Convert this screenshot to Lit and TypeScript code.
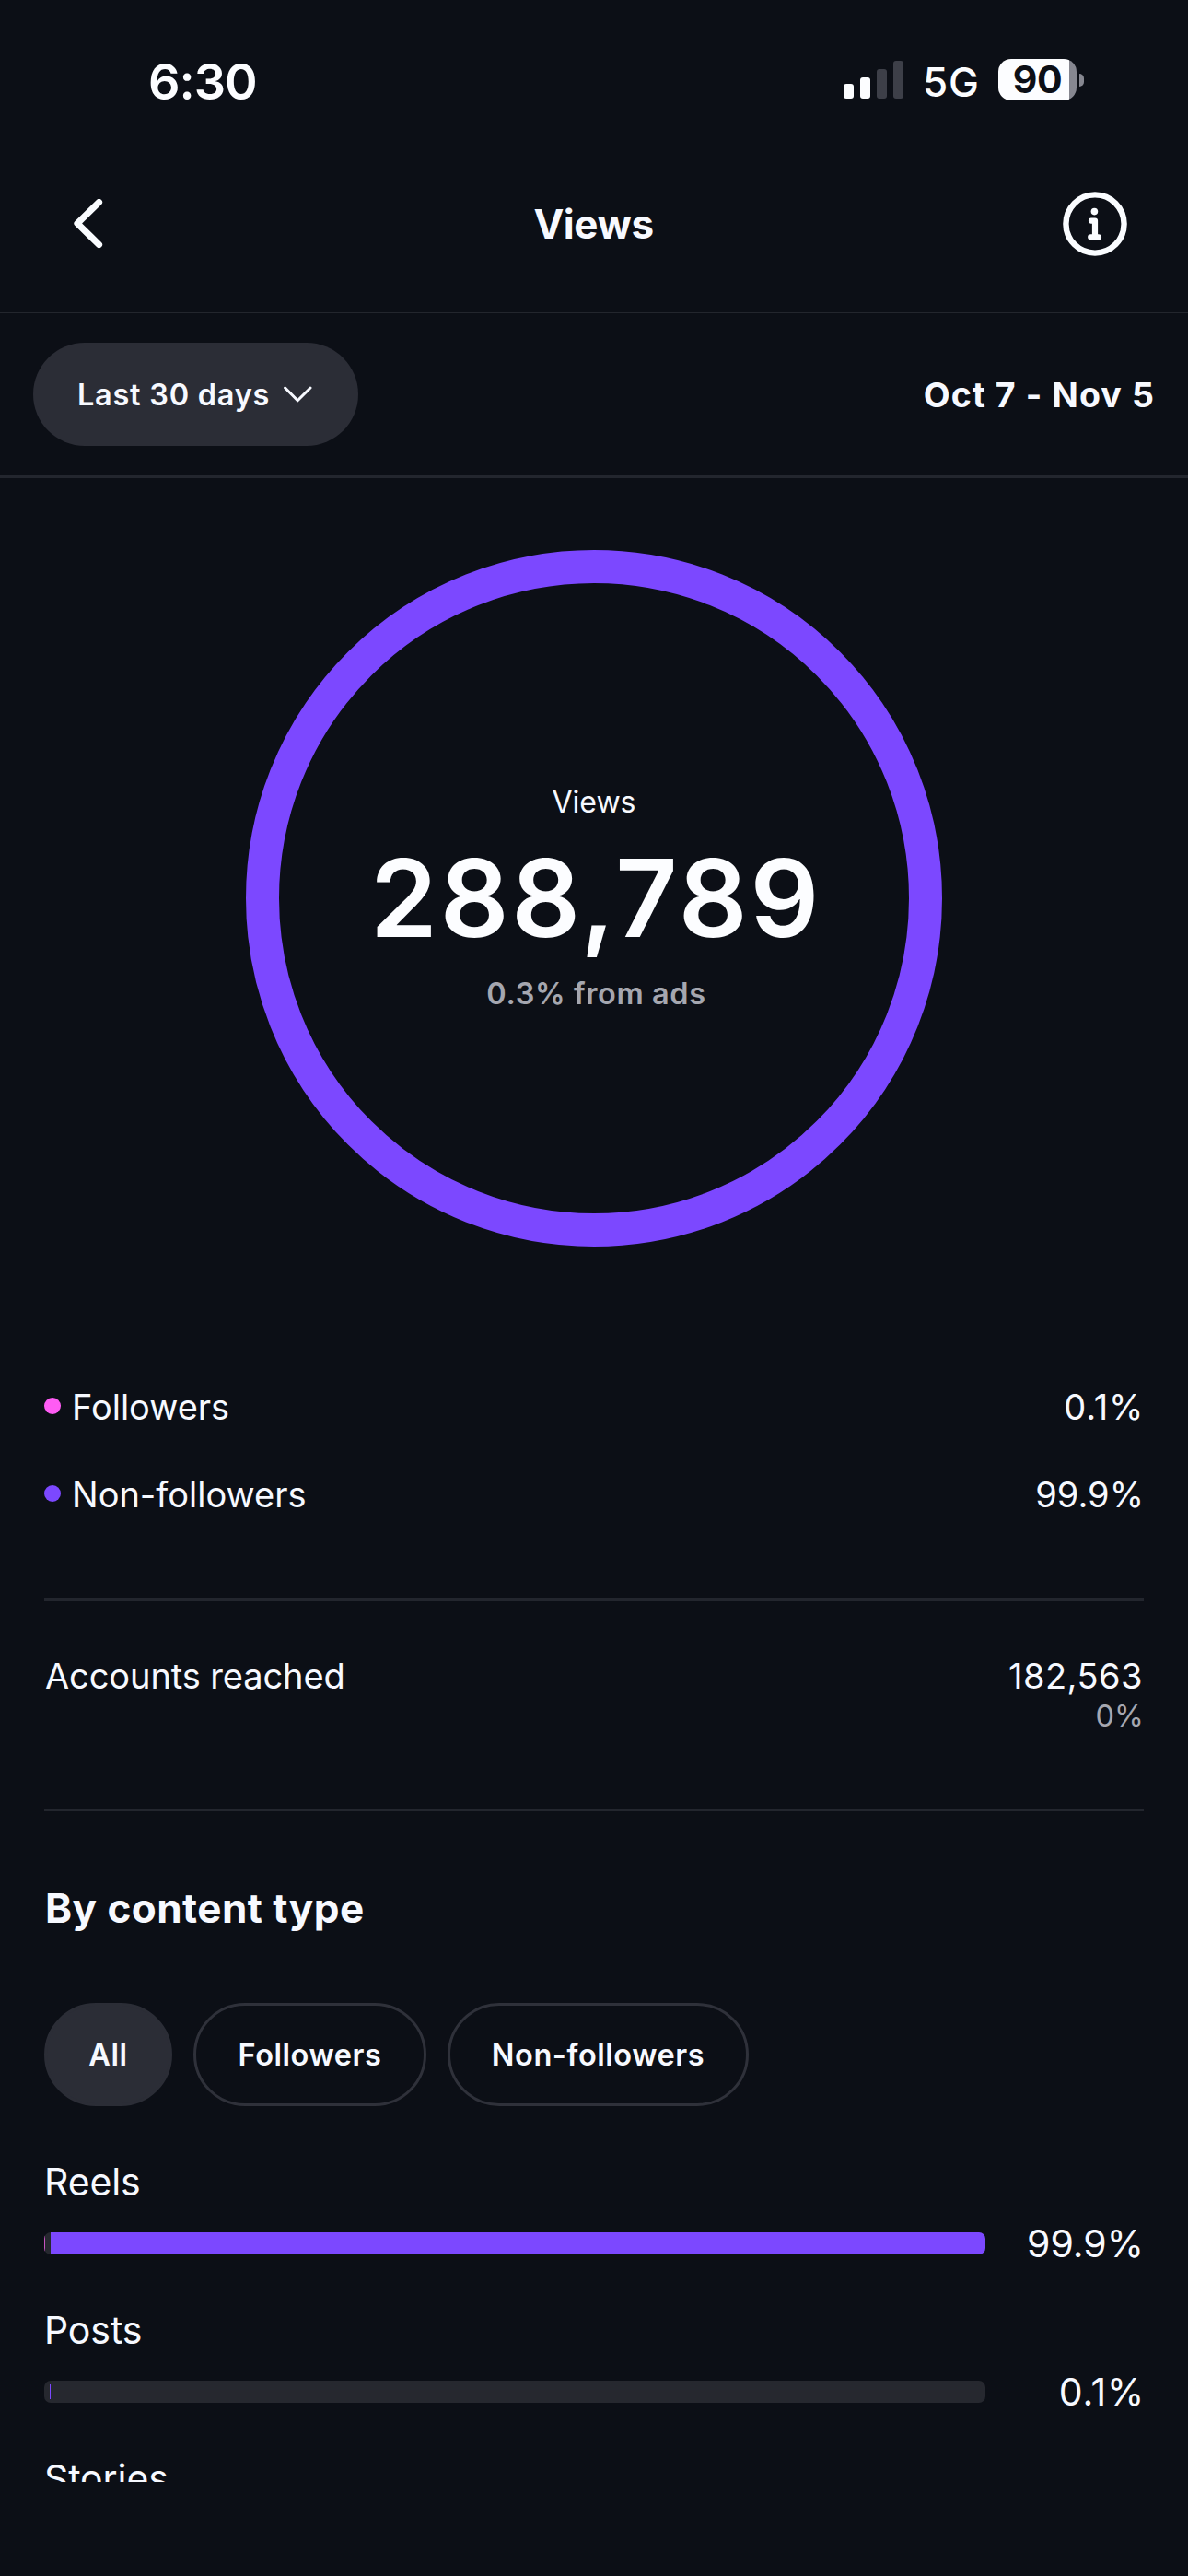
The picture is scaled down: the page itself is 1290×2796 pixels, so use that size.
import { LitElement, html, css, svg, nothing } from "lit";
import { customElement, property } from "lit/decorators.js";
import { classMap } from "lit/directives/class-map.js";

const chevronLeft = svg`<path d="M28.5 3.5 5 26.5 28.5 49.5" fill="none" stroke="#fafcff" stroke-width="7.2" stroke-linecap="round" stroke-linejoin="round"/>`;

@customElement("status-bar")
class StatusBar extends LitElement {
  static styles = css`
    :host {
      display: flex;
      align-items: center;
      justify-content: space-between;
      height: 176px;
      padding: 0 113px 0 161px;
      box-sizing: border-box;
      color: #fcfdff;
    }
    .time {
      font-size: 54px;
      font-weight: 600;
      letter-spacing: -1.04px;
    }
    .right {
      display: flex;
      align-items: center;
    }
    .signal {
      display: flex;
      align-items: flex-end;
      gap: 7px;
      height: 41px;
      margin: 0 21px 3px 0;
    }
    .signal i {
      width: 11px;
      border-radius: 3px;
      background: #fcfdff;
    }
    .b1 { height: 16px; }
    .b2 { height: 23px; }
    .b3 { height: 32px; }
    .b4 { height: 41px; }
    .signal .off { background: #3d3f48; }
    .network {
      width: 82px;
      padding-top: 1px;
      box-sizing: border-box;
      font-size: 44px;
      font-weight: 450;
      letter-spacing: 0.8px;
    }
    .battery {
      display: flex;
      align-items: center;
      gap: 3px;
      margin-bottom: 3px;
    }
    .cell {
      display: flex;
      align-items: center;
      justify-content: center;
      width: 85px;
      height: 45px;
      border-radius: 14px;
      background: linear-gradient(90deg, #fcfdff 77px, #868790 77px);
      color: #0c0f16;
      font-size: 41px;
      font-weight: 650;
      line-height: 45px;
      letter-spacing: -0.4px;
    }
    .nub {
      width: 5px;
      height: 14px;
      border-radius: 0 6px 6px 0;
      background: #868790;
    }
  `;
  render() {
    return html`
      <span class="time">6:30</span>
      <div class="right">
        <div class="signal"><i class="b1"></i><i class="b2"></i><i class="b3 off"></i><i class="b4 off"></i></div>
        <span class="network">5G</span>
        <div class="battery"><span class="cell">90</span><span class="nub"></span></div>
      </div>
    `;
  }
}

@customElement("content-bar")
class ContentBar extends LitElement {
  @property() label = "";
  @property() value = "";
  @property({ type: Number }) share = 0;
  static styles = css`
    :host {
      display: block;
      height: 116px;
      flex: none;
      font-size: 41px;
      line-height: 50px;
    }
    .label {
      height: 50px;
      line-height: 49px;
      letter-spacing: -0.1px;
    }
    .row {
      display: flex;
      align-items: center;
      justify-content: space-between;
      height: 50px;
      margin-top: 16px;
    }
    .track {
      display: flex;
      gap: 6px;
      width: 1022px;
      height: 24px;
      border-radius: 7px;
      overflow: hidden;
      background: #26282f;
    }
    .followers {
      width: 1px;
      flex: none;
      background: #c552c0;
    }
    .followers.empty { background: none; }
    .others { background: #7c48ff; }
    .others.thin {
      flex: none;
      height: 16px;
      margin: 4px 0 4px -1px;
      background: #7c48ff;
    }
    .value { letter-spacing: 0; }
    .value.narrow { letter-spacing: 0.8px; margin-right: -1px; }
  `;
  render() {
    const thin = this.share < 1;
    return html`
      <div class="label">${this.label}</div>
      ${this.value
        ? html`<div class="row">
            <div class="track">
              <div class=${classMap({ followers: true, empty: thin })}></div>
              <div class=${classMap({ others: true, thin })} style="width:${this.share}%"></div>
            </div>
            <span class=${classMap({ value: true, narrow: thin })}>${this.value}</span>
          </div>`
        : nothing}
    `;
  }
}

@customElement("app-root")
class AppRoot extends LitElement {
  static styles = css`
    :host {
      display: flex;
      flex-direction: column;
      width: 1290px;
      height: 2796px;
      box-sizing: border-box;
      overflow: hidden;
      background: #0c0f16;
      color: #f7f9ff;
      font-family: Inter, "Liberation Sans", sans-serif;
      font-weight: 400;
      white-space: nowrap;
    }
    status-bar { flex: none; }
    .header {
      display: grid;
      grid-template-columns: 80px 1fr 80px;
      align-items: center;
      flex: none;
      height: 164px;
      padding: 0 66px 29px 79px;
      box-sizing: border-box;
      border-bottom: 1px solid #23262d;
    }
    .header svg { display: block; }
    .info { justify-self: end; }
    .title {
      margin: 0;
      padding-right: 14px;
      text-align: center;
      font-size: 44px;
      font-weight: 700;
      letter-spacing: -0.45px;
    }
    .filter {
      display: flex;
      align-items: center;
      justify-content: space-between;
      flex: none;
      height: 179px;
      padding: 0 36px;
      box-sizing: border-box;
      border-bottom: 3px solid #23262e;
    }
    .range {
      display: flex;
      align-items: center;
      gap: 15px;
      width: 353px;
      height: 112px;
      padding-left: 48px;
      box-sizing: border-box;
      border-radius: 56px;
      background: #2b2d36;
      font-size: 32.5px;
      font-weight: 600;
      letter-spacing: 0.74px;
    }
    .dates {
      font-size: 37.5px;
      font-weight: 680;
      letter-spacing: 1.1px;
    }
    .scroll {
      display: flex;
      flex-direction: column;
      height: 2175px;
      flex: none;
      padding: 78px 48px 0;
      box-sizing: border-box;
      overflow: hidden;
    }
    .ring {
      display: flex;
      flex-direction: column;
      align-items: center;
      justify-content: center;
      align-self: center;
      flex: none;
      width: 756px;
      height: 756px;
      box-sizing: border-box;
      border: 36px solid #7c48ff;
      border-radius: 50%;
    }
    .ring-label {
      font-size: 32px;
      line-height: 64px;
    }
    .ring-total {
      color: #fcfdff;
      font-size: 117px;
      font-weight: 600;
      line-height: 144px;
      letter-spacing: 2.8px;
      margin-right: -4px;
    }
    .ring-ads {
      margin-left: 5px;
      color: #a5a7b0;
      font-size: 32.5px;
      font-weight: 600;
      line-height: 64px;
      letter-spacing: 0.6px;
    }
    .legend { margin: 126px 0 66px; flex: none; }
    .legend-row {
      display: flex;
      align-items: center;
      height: 95px;
      font-size: 38px;
    }
    .dot {
      width: 18px;
      height: 18px;
      margin: 0 12px 1px 0;
      border-radius: 50%;
    }
    .pink { background: #ff5cf4; }
    .purple { background: #7c48ff; }
    .pct {
      margin-left: auto;
      letter-spacing: 0;
    }
    .pct.narrow { letter-spacing: 0.8px; }
    .divider {
      flex: none;
      height: 3px;
      background: #23262e;
    }
    .reached {
      display: flex;
      justify-content: space-between;
      flex: none;
      height: 86px;
      margin: 57px 0 82px;
      font-size: 38px;
      line-height: 48px;
    }
    .reached-label { margin-left: 1px; letter-spacing: -0.1px; }
    .reached-values {
      display: flex;
      flex-direction: column;
      align-items: flex-end;
      letter-spacing: 0.46px;
    }
    .reached-total { margin-right: 1px; }
    .change {
      color: #a5a7b0;
      font-size: 32.5px;
      line-height: 40px;
      letter-spacing: 0;
    }
    .heading {
      flex: none;
      margin: 75px 0 73px 1px;
      font-size: 44px;
      font-weight: 700;
      line-height: 60px;
      letter-spacing: 0.47px;
    }
    .tabs {
      display: flex;
      flex: none;
      gap: 23px;
      margin-bottom: 58px;
    }
    .tab {
      display: flex;
      align-items: center;
      justify-content: center;
      height: 112px;
      padding: 0 44px;
      box-sizing: border-box;
      border: 3px solid #2f313a;
      border-radius: 56px;
      font-size: 32.5px;
      font-weight: 600;
      letter-spacing: 0.55px;
    }
    .tab.all { width: 139px; background: #2b2d36; border-color: #2b2d36; }
    .tab.fol { width: 253px; }
    .tab.non { width: 327px; }
    .bars {
      display: flex;
      flex-direction: column;
      gap: 45px;
      flex: none;
    }
  `;
  render() {
    return html`
      <status-bar></status-bar>
      <div class="header">
        <svg width="34" height="54" viewBox="0 0 34 54">${chevronLeft}</svg>
        <h1 class="title">Views</h1>
        <svg class="info" width="70" height="70" viewBox="0 0 70 70" fill="none" stroke="#fafcff">
          <circle cx="35" cy="35" r="31.6" stroke-width="6.4" />
          <circle cx="34.4" cy="21.6" r="3.8" fill="#fafcff" stroke="none" />
          <path d="M31 31.6H35V49.3M30.2 49.3H39" stroke-width="6.2" stroke-linecap="round" stroke-linejoin="round" />
        </svg>
      </div>
      <div class="filter">
        <div class="range">
          <span>Last 30 days</span>
          <svg width="32" height="20" viewBox="0 0 32 20">
            <path d="M1.6 3 15.2 16.8 29 3" fill="none" stroke="#f7f9ff" stroke-width="3" stroke-linecap="round" stroke-linejoin="round" />
          </svg>
        </div>
        <span class="dates">Oct 7 - Nov 5</span>
      </div>
      <div class="scroll">
        <div class="ring">
          <span class="ring-label">Views</span>
          <span class="ring-total">288,789</span>
          <span class="ring-ads">0.3% from ads</span>
        </div>
        <div class="legend">
          <div class="legend-row"><i class="dot pink"></i><span>Followers</span><span class="pct narrow">0.1%</span></div>
          <div class="legend-row"><i class="dot purple"></i><span>Non-followers</span><span class="pct">99.9%</span></div>
        </div>
        <div class="divider"></div>
        <div class="reached">
          <span class="reached-label">Accounts reached</span>
          <div class="reached-values"><span class="reached-total">182,563</span><span class="change">0%</span></div>
        </div>
        <div class="divider"></div>
        <h2 class="heading">By content type</h2>
        <div class="tabs">
          <div class="tab all">All</div>
          <div class="tab fol">Followers</div>
          <div class="tab non">Non-followers</div>
        </div>
        <div class="bars">
          <content-bar label="Reels" value="99.9%" share="99.9"></content-bar>
          <content-bar label="Posts" value="0.1%" share="0.1"></content-bar>
          <content-bar label="Stories"></content-bar>
        </div>
      </div>
    `;
  }
}
